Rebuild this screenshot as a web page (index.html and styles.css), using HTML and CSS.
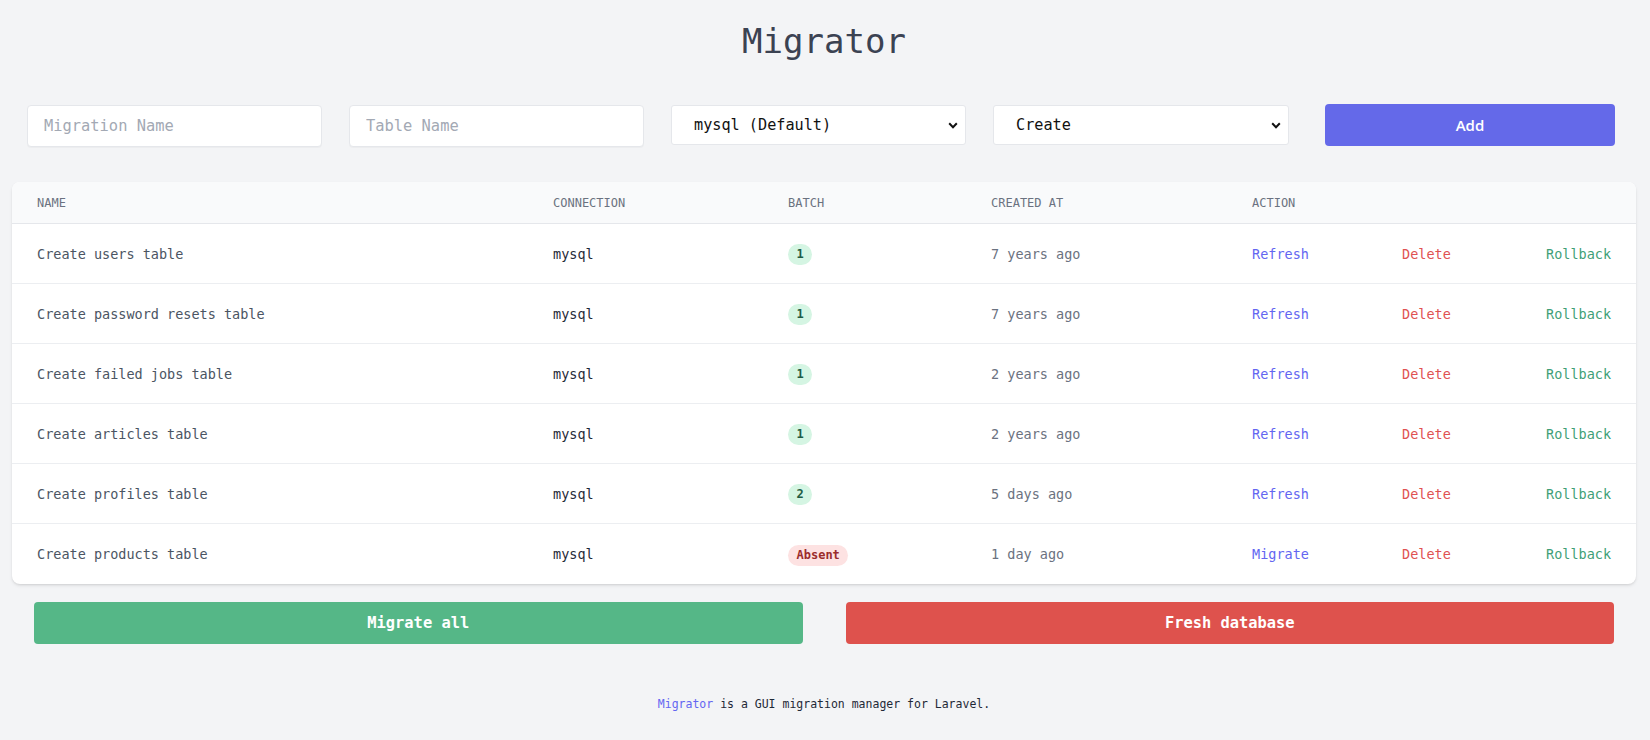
FILE: index.html
```html
<!DOCTYPE html>
<html lang="en">
<head>
<meta charset="utf-8">
<title>Migrator</title>
<link rel="stylesheet" href="styles.css">
</head>
<body>
<div class="page">
  <h1 class="title">Migrator</h1>

  <form class="toolbar">
    <input class="field" type="text" placeholder="Migration Name">
    <input class="field" type="text" placeholder="Table Name">
    <div class="select-wrap">
      <select class="select">
        <option>mysql (Default)</option>
      </select>
      <svg class="chevron" width="10" height="7" viewBox="0 0 10 7"><path d="M1.2 1.3 L5 5.2 L8.8 1.3" fill="none" stroke="#111" stroke-width="2"/></svg>
    </div>
    <div class="select-wrap">
      <select class="select">
        <option>Create</option>
      </select>
      <svg class="chevron" width="10" height="7" viewBox="0 0 10 7"><path d="M1.2 1.3 L5 5.2 L8.8 1.3" fill="none" stroke="#111" stroke-width="2"/></svg>
    </div>
    <button class="btn-add" type="button">Add</button>
  </form>

  <div class="card">
    <div class="row head">
      <div>Name</div>
      <div>Connection</div>
      <div>Batch</div>
      <div>Created at</div>
      <div>Action</div>
      <div></div>
      <div></div>
    </div>
    <div class="row">
      <div class="name">Create users table</div>
      <div class="conn">mysql</div>
      <div><span class="badge ok">1</span></div>
      <div class="date">7 years ago</div>
      <div><a class="act refresh">Refresh</a></div>
      <div><a class="act delete">Delete</a></div>
      <div><a class="act rollback">Rollback</a></div>
    </div>
    <div class="row">
      <div class="name">Create password resets table</div>
      <div class="conn">mysql</div>
      <div><span class="badge ok">1</span></div>
      <div class="date">7 years ago</div>
      <div><a class="act refresh">Refresh</a></div>
      <div><a class="act delete">Delete</a></div>
      <div><a class="act rollback">Rollback</a></div>
    </div>
    <div class="row">
      <div class="name">Create failed jobs table</div>
      <div class="conn">mysql</div>
      <div><span class="badge ok">1</span></div>
      <div class="date">2 years ago</div>
      <div><a class="act refresh">Refresh</a></div>
      <div><a class="act delete">Delete</a></div>
      <div><a class="act rollback">Rollback</a></div>
    </div>
    <div class="row">
      <div class="name">Create articles table</div>
      <div class="conn">mysql</div>
      <div><span class="badge ok">1</span></div>
      <div class="date">2 years ago</div>
      <div><a class="act refresh">Refresh</a></div>
      <div><a class="act delete">Delete</a></div>
      <div><a class="act rollback">Rollback</a></div>
    </div>
    <div class="row">
      <div class="name">Create profiles table</div>
      <div class="conn">mysql</div>
      <div><span class="badge ok">2</span></div>
      <div class="date">5 days ago</div>
      <div><a class="act refresh">Refresh</a></div>
      <div><a class="act delete">Delete</a></div>
      <div><a class="act rollback">Rollback</a></div>
    </div>
    <div class="row last">
      <div class="name">Create products table</div>
      <div class="conn">mysql</div>
      <div><span class="badge absent">Absent</span></div>
      <div class="date">1 day ago</div>
      <div><a class="act refresh">Migrate</a></div>
      <div><a class="act delete">Delete</a></div>
      <div><a class="act rollback">Rollback</a></div>
    </div>
  </div>

  <div class="actions">
    <button class="btn-big green" type="button">Migrate all</button>
    <button class="btn-big red" type="button">Fresh database</button>
  </div>

  <p class="footer"><a class="footer-link">Migrator</a> is a GUI migration manager for Laravel.</p>
</div>
</body>
</html>
```

FILE: styles.css
```css
* { box-sizing: border-box; }

html, body {
  margin: 0;
  padding: 0;
  background: #f3f4f6;
}

body {
  font-family: "DejaVu Sans Mono", "Liberation Mono", monospace;
  color: #374151;
}

.page {
  padding: 0 14px 0 12px;
}

.title {
  margin: 0;
  padding-top: 21px;
  height: 61px;
  line-height: 40px;
  font-size: 34px;
  font-weight: 400;
  text-align: center;
  color: #3b4252;
}

.toolbar {
  display: grid;
  grid-template-columns: 295px 295px 295px 296px 1fr;
  column-gap: 27px;
  align-items: center;
  margin: 42px 21px 0 15px;
  height: 43px;
}

.field {
  height: 42px;
  margin-top: 2px;
  width: 100%;
  border: 1px solid #e5e7eb;
  border-radius: 4px;
  background: #fff;
  padding: 0 16px;
  font-family: "DejaVu Sans Mono", monospace;
  font-size: 15.4px;
  color: #111827;
  box-shadow: 0 1px 1px rgba(0,0,0,0.03);
  outline: none;
}

.field::placeholder { color: #a3a9b4; }

.select-wrap {
  position: relative;
  height: 40px;
}

.select {
  appearance: none;
  -webkit-appearance: none;
  width: 100%;
  height: 40px;
  border: 1px solid #e5e7eb;
  border-radius: 3px;
  background: #fff;
  padding: 0 22px;
  font-family: "DejaVu Sans Mono", monospace;
  font-size: 15.2px;
  color: #111;
  outline: none;
}

.chevron {
  position: absolute;
  right: 8px;
  top: 17px;
  pointer-events: none;
}

.btn-add {
  height: 42px;
  margin-left: 9px;
  border: 0;
  border-radius: 4px;
  background: #6469e9;
  color: #fff;
  font-family: "Open Sans", "Noto Sans", sans-serif;
  font-size: 15px;
  font-weight: 600;
}

.card {
  margin-top: 36px;
  background: #fff;
  border-radius: 8px;
  overflow: hidden;
  box-shadow: 0 2px 4px -1px rgba(0,0,0,0.12), 0 1px 2px rgba(0,0,0,0.06);
}

.row {
  display: grid;
  grid-template-columns: 516px 235px 203px 261px 150px 144px 1fr;
  align-items: center;
  padding: 0 25px;
  height: 60px;
  border-bottom: 1px solid #eceef1;
  font-size: 13.5px;
}

.row.last { border-bottom: 0; height: 60px; }

.row.head {
  height: 42px;
  background: #f9fafb;
  border-bottom: 1px solid #e5e7eb;
  font-size: 12px;
  text-transform: uppercase;
  color: #6b7280;
}

.name { color: #4b5563; }
.conn { color: #1f2937; }
.date { color: #6b7280; }

.badge {
  display: inline-block;
  height: 21px;
  line-height: 21px;
  padding: 0 8.5px;
  border-radius: 11px;
  font-size: 12px;
  font-weight: 700;
  margin-top: 2px;
}

.badge.ok { background: #d5f5e3; color: #1f5c44; }
.badge.absent { background: #fde2e2; color: #9b2c2c; }

.act { cursor: pointer; }
.refresh { color: #6366f1; }
.delete { color: #e05252; }
.rollback { color: #3f9f77; }

.actions {
  display: grid;
  grid-template-columns: 1fr 1fr;
  column-gap: 43px;
  margin: 18px 22px 0 22px;
}

.btn-big {
  height: 42px;
  border: 0;
  border-radius: 4px;
  color: #fff;
  font-family: "DejaVu Sans Mono", monospace;
  font-size: 15.4px;
  font-weight: 700;
}

.btn-big.green { background: #55b787; }
.btn-big.red { background: #de524d; }

.footer {
  margin: 52px 0 0;
  text-align: center;
  font-size: 11.5px;
  line-height: 16px;
  color: #1f2937;
}

.footer-link { color: #6366f1; }
```
